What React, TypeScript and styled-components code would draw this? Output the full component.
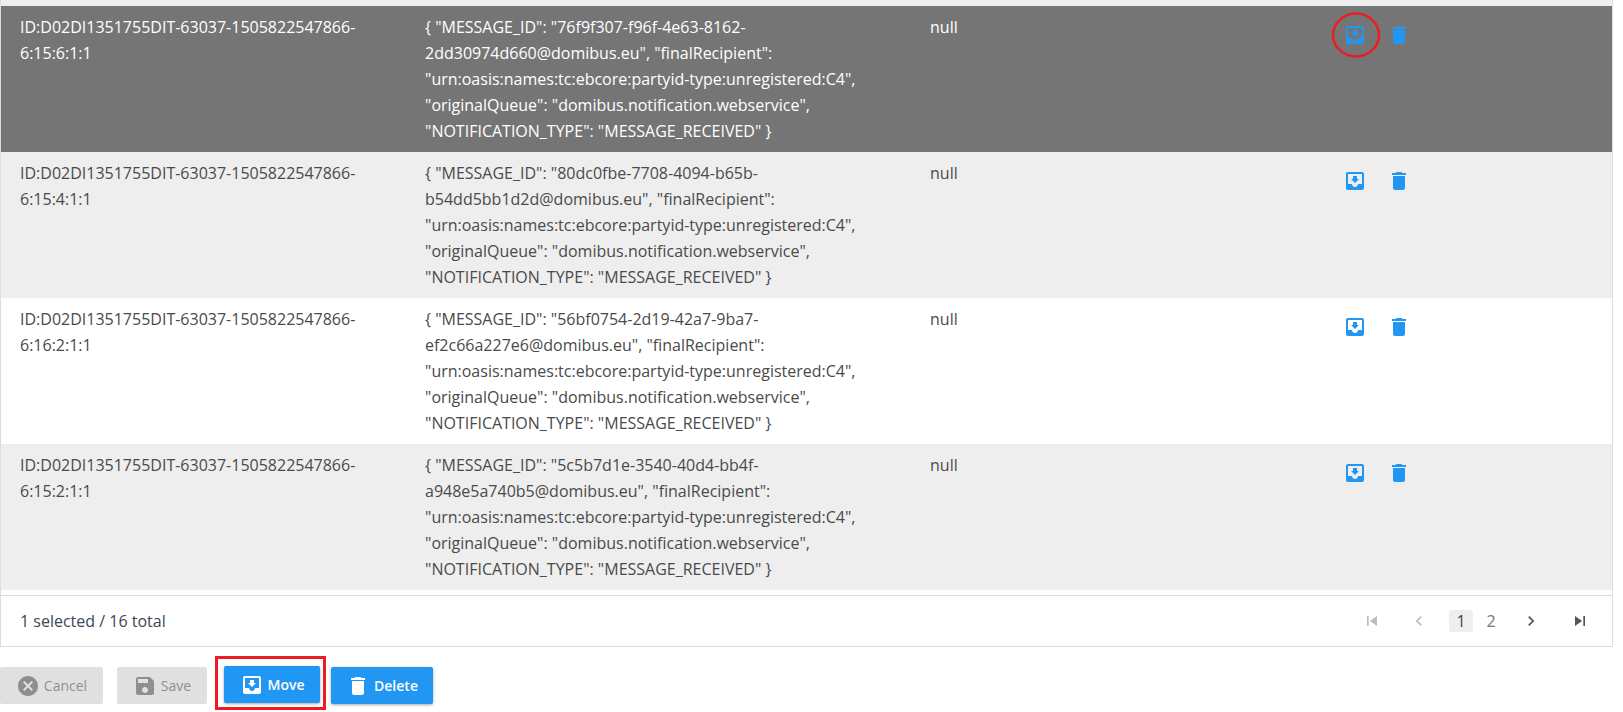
import React from "react";
import styled, { createGlobalStyle } from "styled-components";
import { MdMoveToInbox, MdDelete, MdCancel, MdSave, MdSkipPrevious, MdSkipNext, MdChevronLeft, MdChevronRight } from "react-icons/md";

const Global = createGlobalStyle`
  html, body { margin: 0; padding: 0; background: #fff; }
  body { font-family: "Open Sans", "Liberation Sans", sans-serif; font-size: 16px; color: #4a4a4a; width: 1623px; height: 712px; overflow: hidden; }
`;

const Page = styled.div`
  width: 1613px;
  display: flex;
  flex-direction: column;
`;
const Table = styled.div`
  border-left: 1px solid #ddd;
  border-right: 1px solid #ddd;
  border-bottom: 1px solid #ddd;
`;
const TopStrip = styled.div`
  height: 6px;
  background: #eee;
`;
const Body = styled.div`
  padding-bottom: 5px;
  border-bottom: 1px solid #ddd;
`;
const Row = styled.div<{ $tone: "selected" | "odd" | "even" }>`
  display: grid;
  grid-template-columns: 405px 505px 412px 1fr;
  height: 146px;
  box-sizing: border-box;
  padding: 8px 0;
  line-height: 26px;
  background: ${(p) => (p.$tone === "selected" ? "#757575" : p.$tone === "odd" ? "#eee" : "#fff")};
  color: ${(p) => (p.$tone === "selected" ? "#fff" : "#4a4a4a")};
`;
const Cell = styled.div`
  padding: 0 20px 0 19px;
`;
const Actions = styled.div`
  display: flex;
  align-items: flex-start;
  gap: 20px;
  padding: 9px 0 0 20px;
`;
const ActionIcon = styled.span`
  position: relative;
  display: block;
  width: 24px;
  height: 24px;
  color: #2196f3;
  font-size: 24px;
  line-height: 0;
`;
const Ring = styled.svg`
  position: absolute;
  left: -14px;
  top: -15px;
`;
const Footer = styled.div`
  height: 50px;
  display: flex;
  align-items: center;
  justify-content: space-between;
  padding: 0 20px 0 19px;
`;
const Summary = styled.span`
  color: #3c4656;
`;
const Pager = styled.div`
  display: flex;
  align-items: center;
`;
const PageArrow = styled.span<{ $off?: boolean; $gap: number }>`
  display: flex;
  width: 24px;
  height: 24px;
  margin-left: ${(p) => p.$gap}px;
  font-size: 20px;
  align-items: center;
  justify-content: center;
  color: ${(p) => (p.$off ? "#bdbdbd" : "#555")};
`;
const PageNum = styled.span<{ $on?: boolean; $gap: number }>`
  width: 24px;
  height: 22px;
  margin-left: ${(p) => p.$gap}px;
  line-height: 22px;
  text-align: center;
  border-radius: 3px;
  font-size: 16px;
  color: ${(p) => (p.$on ? "#444" : "#757575")};
  background: ${(p) => (p.$on ? "#eee" : "transparent")};
`;
const Buttons = styled.div`
  display: flex;
  align-items: flex-start;
  margin-top: 9px;
`;
const Btn = styled.button<{ $primary?: boolean; $w: number; $ml?: number; $mt?: number }>`
  width: ${(p) => p.$w}px;
  margin: ${(p) => p.$mt ?? 0}px 0 0 ${(p) => p.$ml ?? 0}px;
  height: 37px;
  padding: 0;
  border: 0;
  border-radius: 2px;
  display: flex;
  align-items: center;
  justify-content: center;
  gap: 4px;
  font-family: inherit;
  font-size: 14px;
  font-weight: ${(p) => (p.$primary ? 600 : 400)};
  background: ${(p) => (p.$primary ? "#2196f3" : "#e0e0e0")};
  color: ${(p) => (p.$primary ? "#fff" : "#8f8f8f")};
  box-shadow: ${(p) => (p.$primary ? "0 1px 3px rgba(0,0,0,.35)" : "none")};
`;
const MoveBox = styled.div`
  margin-left: 8px;
  border: 3px solid #ed1c24;
  padding: 7px 3px 4px 6px;
  display: flex;
`;

const rows = [
  { id: "ID:D02DI1351755DIT-63037-1505822547866-6:15:6:1:1", m: "76f9f307-f96f-4e63-8162-2dd30974d660", tone: "selected" as const },
  { id: "ID:D02DI1351755DIT-63037-1505822547866-6:15:4:1:1", m: "80dc0fbe-7708-4094-b65b-b54dd5bb1d2d", tone: "odd" as const },
  { id: "ID:D02DI1351755DIT-63037-1505822547866-6:16:2:1:1", m: "56bf0754-2d19-42a7-9ba7-ef2c66a227e6", tone: "even" as const },
  { id: "ID:D02DI1351755DIT-63037-1505822547866-6:15:2:1:1", m: "5c5b7d1e-3540-40d4-bb4f-a948e5a740b5", tone: "odd" as const },
];

export default function App() {
  return (
    <Page>
      <Global />
      <Table>
        <TopStrip />
        <Body>
          {rows.map((r) => (
            <Row key={r.m} $tone={r.tone}>
              <Cell>{r.id}</Cell>
              <Cell>
                {`{ "MESSAGE_ID": "${r.m}@domibus.eu", "finalRecipient": "urn:oasis:names:tc:ebcore:partyid-type:unregistered:C4", "originalQueue": "domibus.notification.webservice", "NOTIFICATION_TYPE": "MESSAGE_RECEIVED" }`}
              </Cell>
              <Cell>null</Cell>
              <Actions>
                <ActionIcon>
                  <MdMoveToInbox />
                  {r.tone === "selected" && (
                    <Ring width="54" height="54" viewBox="0 0 54 54" fill="none">
                      <ellipse cx="27" cy="27" rx="23" ry="21.5" stroke="#ed1c24" strokeWidth="2.5" />
                    </Ring>
                  )}
                </ActionIcon>
                <ActionIcon>
                  <MdDelete />
                </ActionIcon>
              </Actions>
            </Row>
          ))}
        </Body>
        <Footer>
          <Summary>1 selected / 16 total</Summary>
          <Pager>
            <PageArrow $off $gap={0}><MdSkipPrevious /></PageArrow>
            <PageArrow $off $gap={23}><MdChevronLeft /></PageArrow>
            <PageNum $on $gap={18}>1</PageNum>
            <PageNum $gap={6}>2</PageNum>
            <PageArrow $gap={16}><MdChevronRight /></PageArrow>
            <PageArrow $gap={25}><MdSkipNext /></PageArrow>
          </Pager>
        </Footer>
      </Table>
      <Buttons>
        <Btn $w={103} $mt={11}><MdCancel size={24} />Cancel</Btn>
        <Btn $w={90} $ml={14} $mt={11}><MdSave size={24} />Save</Btn>
        <MoveBox>
          <Btn $primary $w={96}><MdMoveToInbox size={24} />Move</Btn>
        </MoveBox>
        <Btn $primary $w={102} $ml={5} $mt={11}><MdDelete size={24} />Delete</Btn>
      </Buttons>
    </Page>
  );
}
